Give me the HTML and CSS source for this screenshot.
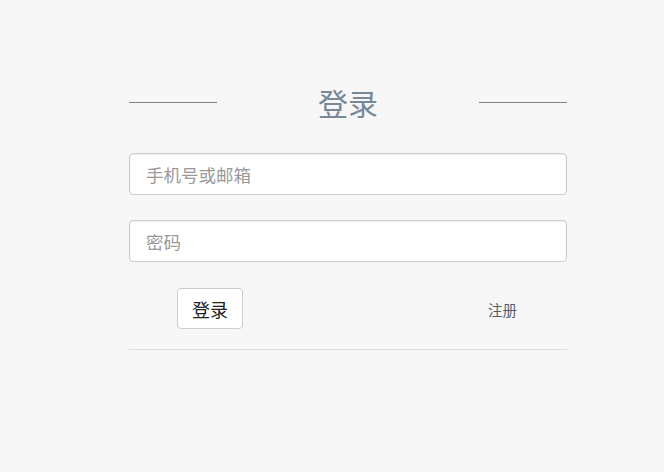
FILE: index.html
```html
<!DOCTYPE html>
<html lang="zh">
<head>
<meta charset="utf-8">
<link rel="stylesheet" href="styles.css">
</head>
<body>
<div class="login">
  <div class="title-row">
    <span class="rule"></span>
    <h1 class="title">登录</h1>
    <span class="rule"></span>
  </div>
  <form class="form">
    <input class="field" type="text" placeholder="手机号或邮箱">
    <input class="field" type="password" placeholder="密码">
    <div class="actions">
      <button class="btn" type="button">登录</button>
      <a class="link" href="#">注册</a>
    </div>
  </form>
  <div class="bottom-rule"></div>
</div>
</body>
</html>
```
FILE: styles.css
```css
html, body {
  margin: 0;
  padding: 0;
  background: #f7f7f7;
  font-family: "Noto Sans CJK SC", "Noto Sans", sans-serif;
}
.login {
  width: 438px;
  margin-left: 129px;
  padding-top: 82px;
}
.title-row {
  display: flex;
  align-items: center;
  justify-content: space-between;
  height: 40px;
}
.rule {
  width: 88px;
  height: 1px;
  background: #808080;
}
.title {
  margin: 0;
  font-size: 30px;
  font-weight: normal;
  line-height: 40px;
  color: #778899;
}
.form {
  margin: 31px 0 0;
  display: flex;
  flex-direction: column;
}
.field {
  box-sizing: border-box;
  height: 42px;
  margin: 0 0 25px;
  padding: 0 16px;
  border: 1px solid #cccccc;
  border-radius: 4px;
  background: #fff;
  box-shadow: inset 0 1px 2px rgba(0,0,0,0.08);
  font-family: inherit;
  font-size: 17.5px;
  color: #333;
  outline: none;
}
.field::placeholder {
  color: #999;
}
.actions {
  display: flex;
  align-items: center;
  margin-top: 1px;
  height: 41px;
}
.btn {
  box-sizing: border-box;
  margin-left: 48px;
  width: 66px;
  height: 41px;
  padding: 0;
  border: 1px solid #cccccc;
  border-radius: 4px;
  background: #fff;
  font-family: inherit;
  font-size: 18px;
  color: #222;
}
.link {
  margin-left: 245px;
  margin-top: 2px;
  font-size: 14.5px;
  color: #555e6b;
  text-decoration: none;
}
.bottom-rule {
  margin-top: 20px;
  height: 1px;
  background: #dddddd;
}
```
